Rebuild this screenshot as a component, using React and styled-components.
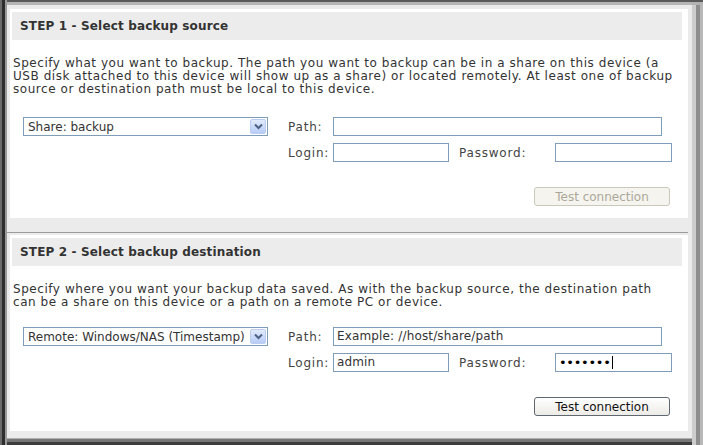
import styled, { createGlobalStyle } from 'styled-components';

const GlobalStyle = createGlobalStyle`
  html, body {
    margin: 0;
    padding: 0;
    background: #ebebeb;
  }
  body {
    font-family: "DejaVu Sans", Verdana, sans-serif;
  }
`;

const Frame = styled.div`
  box-sizing: border-box;
  width: 703px;
  height: 445px;
  padding: 9px 15px 0 10px;
  background: #ebebeb;
  box-shadow:
    inset 2px 0 0 #6a6a6a,
    inset 5px 0 0 #2e2e2e,
    inset 7px 0 0 #9a9a9a,
    inset 0 2px 0 #5a5a5a,
    inset 0 5px 0 #b4b4b4,
    inset -3px 0 0 #b8b8b8,
    inset -7px 0 0 #8e8e8e,
    inset -11px 0 0 #cdcdcd,
    inset 0 -3px 0 #3c3c3c,
    inset 0 -6px 0 #777,
    inset 0 -7px 0 #b0b0b0;
`;

const Panel = styled.section`
  background: #fff;
  padding: 3px 6px ${p => p.$bottom || '13px'} 2px;
`;

const Header = styled.div`
  height: 28px;
  display: flex;
  align-items: center;
  padding-left: 8px;
  background: #ececec;
  font-size: 12px;
  font-weight: bold;
  letter-spacing: 0.15px;
  color: #333;
`;

const Intro = styled.p`
  margin: 17px 0 0 1px;
  font-size: 12px;
  letter-spacing: 0.55px;
  line-height: 13px;
  color: #333;
  white-space: nowrap;
`;

const Divider = styled.div`
  height: 1px;
  margin: 14px 0 2px -3px;
  background: #9c9c9c;
`;

const FormRow = styled.div`
  display: flex;
  align-items: flex-start;
  margin-top: ${p => p.$gap || '21px'};
  padding-left: 11px;
  gap: 20px;
`;

const SelectBox = styled.div`
  box-sizing: border-box;
  width: 245px;
  height: 19px;
  display: flex;
  align-items: center;
  justify-content: space-between;
  border: 1px solid #7f9db9;
  background: #fff;
  padding: 0 1px 0 4px;
  font-size: 12px;
  color: #333;
  white-space: nowrap;
`;

const Arrow = styled.span`
  box-sizing: border-box;
  flex: none;
  width: 16px;
  height: 15px;
  display: flex;
  align-items: center;
  justify-content: center;
  border: 1px solid #bccdf2;
  border-radius: 2px;
  background: linear-gradient(#e2ebfd, #b7cbf5);
`;

const Fields = styled.div`
  display: grid;
  grid-template-columns: 45px 116px 106px 117px;
  row-gap: 7px;
  align-items: center;
`;

const Label = styled.span`
  font-size: 12px;
  letter-spacing: 0.8px;
  color: #444;
  padding-left: ${p => (p.$indent ? '10px' : '0')};
`;

const Field = styled.div`
  box-sizing: border-box;
  width: ${p => p.$width || 'auto'};
  grid-column: ${p => p.$span || 'auto'};
  height: 19px;
  border: 1px solid #7f9db9;
  background: #fff;
  padding: 0 3px;
  font-size: 12px;
  letter-spacing: 0.15px;
  line-height: 17px;
  color: #333;
  white-space: nowrap;
  overflow: hidden;
`;

const Dots = styled.span`
  color: #000;
  font-size: 13px;
  letter-spacing: -0.3px;
`;

const Caret = styled.span`
  display: inline-block;
  width: 1px;
  height: 13px;
  margin-left: 1px;
  background: #000;
  vertical-align: -2px;
`;

const ButtonRow = styled.div`
  display: flex;
  justify-content: flex-end;
  margin: 25px 12px 0 0;
`;

const TestButton = styled.button`
  box-sizing: border-box;
  width: 136px;
  height: 19px;
  padding: 0;
  border-radius: 3px;
  font-family: "DejaVu Sans", Verdana, sans-serif;
  font-size: 12px;
  border: 1px solid ${p => (p.disabled ? '#cac8bb' : '#5f6870')};
  background: ${p => (p.disabled ? '#f5f4ef' : 'linear-gradient(#ffffff, #ecebe6)')};
  color: ${p => (p.disabled ? '#aca899' : '#111')};
`;

const Chevron = () => (
  <svg width="9" height="7" viewBox="0 0 9 7">
    <path d="M1 1.5 L4.5 5 L8 1.5" fill="none" stroke="#4d6185" strokeWidth="2" />
  </svg>
);

const Step = ({ title, lines, option, path, login, password, disabled, gap, bottom }) => (
  <Panel $bottom={bottom}>
    <Header>{title}</Header>
    <Intro>
      {lines.map((l, i) => (
        <span key={i}>
          {l}
          {i < lines.length - 1 && <br />}
        </span>
      ))}
    </Intro>
    <FormRow $gap={gap}>
      <SelectBox>
        <span>{option}</span>
        <Arrow>
          <Chevron />
        </Arrow>
      </SelectBox>
      <Fields>
        <Label>Path:</Label>
        <Field $span="2 / 5" $width="329px">{path}</Field>
        <Label>Login:</Label>
        <Field>{login}</Field>
        <Label $indent>Password:</Label>
        <Field>
          {password && (
            <>
              <Dots>{password}</Dots>
              <Caret />
            </>
          )}
        </Field>
      </Fields>
    </FormRow>
    <ButtonRow>
      <TestButton disabled={disabled}>Test connection</TestButton>
    </ButtonRow>
  </Panel>
);

const App = () => (
  <>
    <GlobalStyle />
    <Frame>
      <Step
        title="STEP 1 - Select backup source"
        lines={[
          'Specify what you want to backup. The path you want to backup can be in a share on this device (a',
          'USB disk attached to this device will show up as a share) or located remotely. At least one of backup',
          'source or destination path must be local to this device.',
        ]}
        option="Share: backup"
        path=""
        login=""
        password=""
        disabled
        bottom="12px"
      />
      <Divider />
      <Step
        title="STEP 2 - Select backup destination"
        lines={[
          'Specify where you want your backup data saved. As with the backup source, the destination path',
          'can be a share on this device or a path on a remote PC or device.',
        ]}
        option="Remote: Windows/NAS (Timestamp)"
        path="Example: //host/share/path"
        login="admin"
        password="•••••••"
        gap="18px"
        bottom="15px"
      />
    </Frame>
  </>
);

export default App;
